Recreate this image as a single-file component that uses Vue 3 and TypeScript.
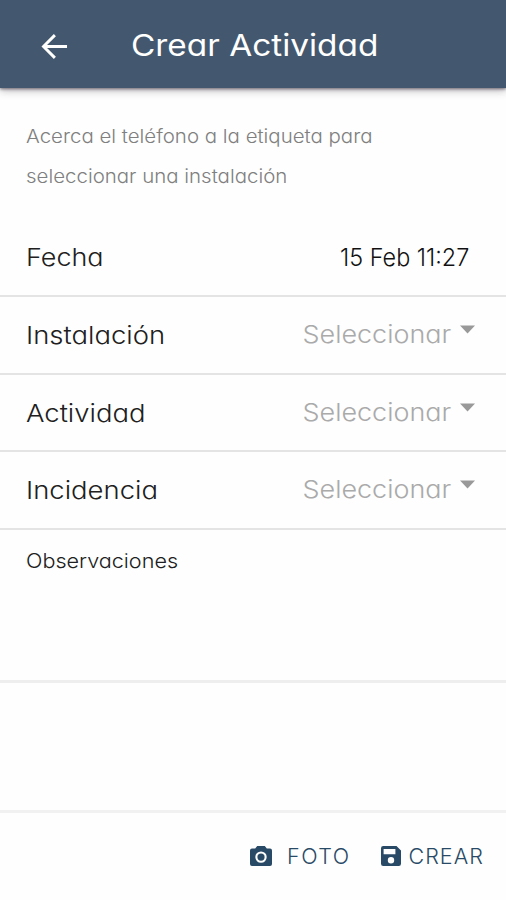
<script setup lang="ts">
interface Field {
  id: string
  label: string
}

const fields: Field[] = [
  { id: 'instalacion', label: 'Instalación' },
  { id: 'actividad', label: 'Actividad' },
  { id: 'incidencia', label: 'Incidencia' },
]
</script>

<template>
  <main class="screen">
    <header class="bar">
      <svg class="back" viewBox="0 0 28 28" fill="none" stroke="#fff" stroke-width="3">
        <path d="M27 14H3M14.4 2.2L2.6 14l11.8 11.8" />
      </svg>
      <h1 class="title">Crear Actividad</h1>
    </header>

    <p class="hint">
      <span class="hint-line">Acerca el teléfono a la etiqueta para</span>
      <span class="hint-line">seleccionar una instalación</span>
    </p>

    <section class="row first">
      <span class="label fecha">Fecha</span>
      <span class="date">15 Feb 11:27</span>
    </section>
    <section v-for="field in fields" :key="field.id" class="row" :class="field.id">
      <span class="label">{{ field.label }}</span>
      <span class="select">
        <span class="placeholder">Seleccionar</span>
        <svg class="caret" viewBox="0 0 15 9"><path d="M0 .5h15L7.5 8.5z" fill="#999" /></svg>
      </span>
    </section>

    <section class="notes"><span class="notes-label">Observaciones</span></section>
    <div class="space"></div>

    <footer class="actions">
      <button class="action photo">
        <svg class="camera" viewBox="0 0 22 20">
          <path fill="#294a66" fill-rule="evenodd" d="M7.2 0h7.6l2 2.4H20a2 2 0 0 1 2 2V18a2 2 0 0 1-2 2H2a2 2 0 0 1-2-2V4.4a2 2 0 0 1 2-2h3.2zM11 5.4a5.700 5.700 0 1 0 0 11.400a5.700 5.700 0 0 0 0-11.400z" />
          <circle cx="11" cy="11.100" r="3.600" fill="#294a66" />
        </svg>
        <span class="photo-text">FOTO</span>
      </button>
      <button class="action create">
        <svg class="disk" viewBox="0 0 20 20">
          <path fill="#294a66" fill-rule="evenodd" d="M2.200 0H15.500L20 4.500V17.800A2.200 2.200 0 0 1 17.800 20H2.200A2.200 2.200 0 0 1 0 17.800V2.200A2.200 2.200 0 0 1 2.200 0zM2.600 3v5.300h11.800V3zM10 11a3.200 3.200 0 1 0 0 6.400a3.200 3.200 0 0 0 0-6.400z" />
        </svg>
        <span class="create-text">CREAR</span>
      </button>
    </footer>
  </main>
</template>

<style>
body {
  margin: 0;
  background: #fefefe;
}
</style>

<style scoped>
.screen {
  display: flex;
  flex-direction: column;
  width: 506px;
  height: 900px;
  overflow: hidden;
  background: #fefefe;
  color: #202020;
  font-family: Inter, 'Open Sans', sans-serif;
  font-feature-settings: 'cv11';
  font-weight: 300;
  white-space: nowrap;
}
.bar {
  display: flex;
  flex: none;
  align-items: center;
  box-sizing: border-box;
  height: 88px;
  padding: 2px 0 0 41px;
  background: #43586e;
  box-shadow: 0 1px 3px rgba(40, 30, 50, 0.6), 0 3px 8px rgba(60, 50, 60, 0.3);
}
.back {
  width: 27px;
  height: 27px;
  margin-top: 3px;
}
.title {
  margin: 0 0 0 63px;
  color: #fff;
  font-size: 30px;
  font-weight: 400;
  line-height: 40px;
  transform: scaleX(1.112);
  transform-origin: left;
}
.hint {
  display: flex;
  flex: none;
  flex-direction: column;
  align-items: flex-start;
  height: 90px;
  margin: 28px 0 0;
  padding: 0 26px 13px;
  box-sizing: border-box;
  color: #808080;
  font-size: 18.5px;
  line-height: 40px;
}
.hint-line {
  flex: none;
  transform: scaleX(1.105);
  transform-origin: left;
}
.row {
  display: flex;
  flex: none;
  align-items: center;
  justify-content: space-between;
  box-sizing: border-box;
  height: 77.5px;
  padding: 0 31px 0 26px;
  border-bottom: 2px solid #e4e4e4;
  font-size: 24.5px;
  line-height: 36px;
}
.first {
  height: 91px;
  padding: 13px 37px 0 26px;
}
.label {
  transform: scaleX(1.12);
  transform-origin: left;
}
.fecha {
  transform: scaleX(1.1);
}
.actividad {
  padding-top: 1px;
}
.date {
  color: #111;
  transform: scaleX(0.955);
  transform-origin: right;
}
.select {
  display: flex;
  align-items: flex-start;
  color: #aaa;
  margin-top: -2px;
}
.placeholder {
  transform: scaleX(1.1);
  transform-origin: right;
}
.caret {
  width: 15px;
  height: 9px;
  margin: 9px 0 0 9px;
}
.notes {
  flex: none;
  box-sizing: border-box;
  height: 153px;
  padding: 15px 26px;
  border-bottom: 3px solid #eee;
  font-size: 20px;
  line-height: 32px;
}
.notes-label {
  display: inline-block;
  transform: scaleX(1.08);
  transform-origin: left;
}
.space {
  flex: none;
  height: 127px;
}
.actions {
  display: flex;
  flex: 1;
  align-items: flex-start;
  padding: 27px 0 0 250px;
  border-top: 3px solid #f1f1f1;
}
.action {
  display: flex;
  align-items: center;
  padding: 0;
  border: 0;
  background: none;
  color: #294a66;
  font: inherit;
  font-size: 21.5px;
  line-height: 32px;
}
.camera {
  width: 22px;
  height: 20px;
  margin-right: 15px;
}
.photo-text {
  letter-spacing: 1.5px;
}
.disk {
  width: 20px;
  height: 20px;
  margin-right: 8px;
}
.create {
  margin-left: 30px;
}
.create-text {
  letter-spacing: 1px;
}
</style>
